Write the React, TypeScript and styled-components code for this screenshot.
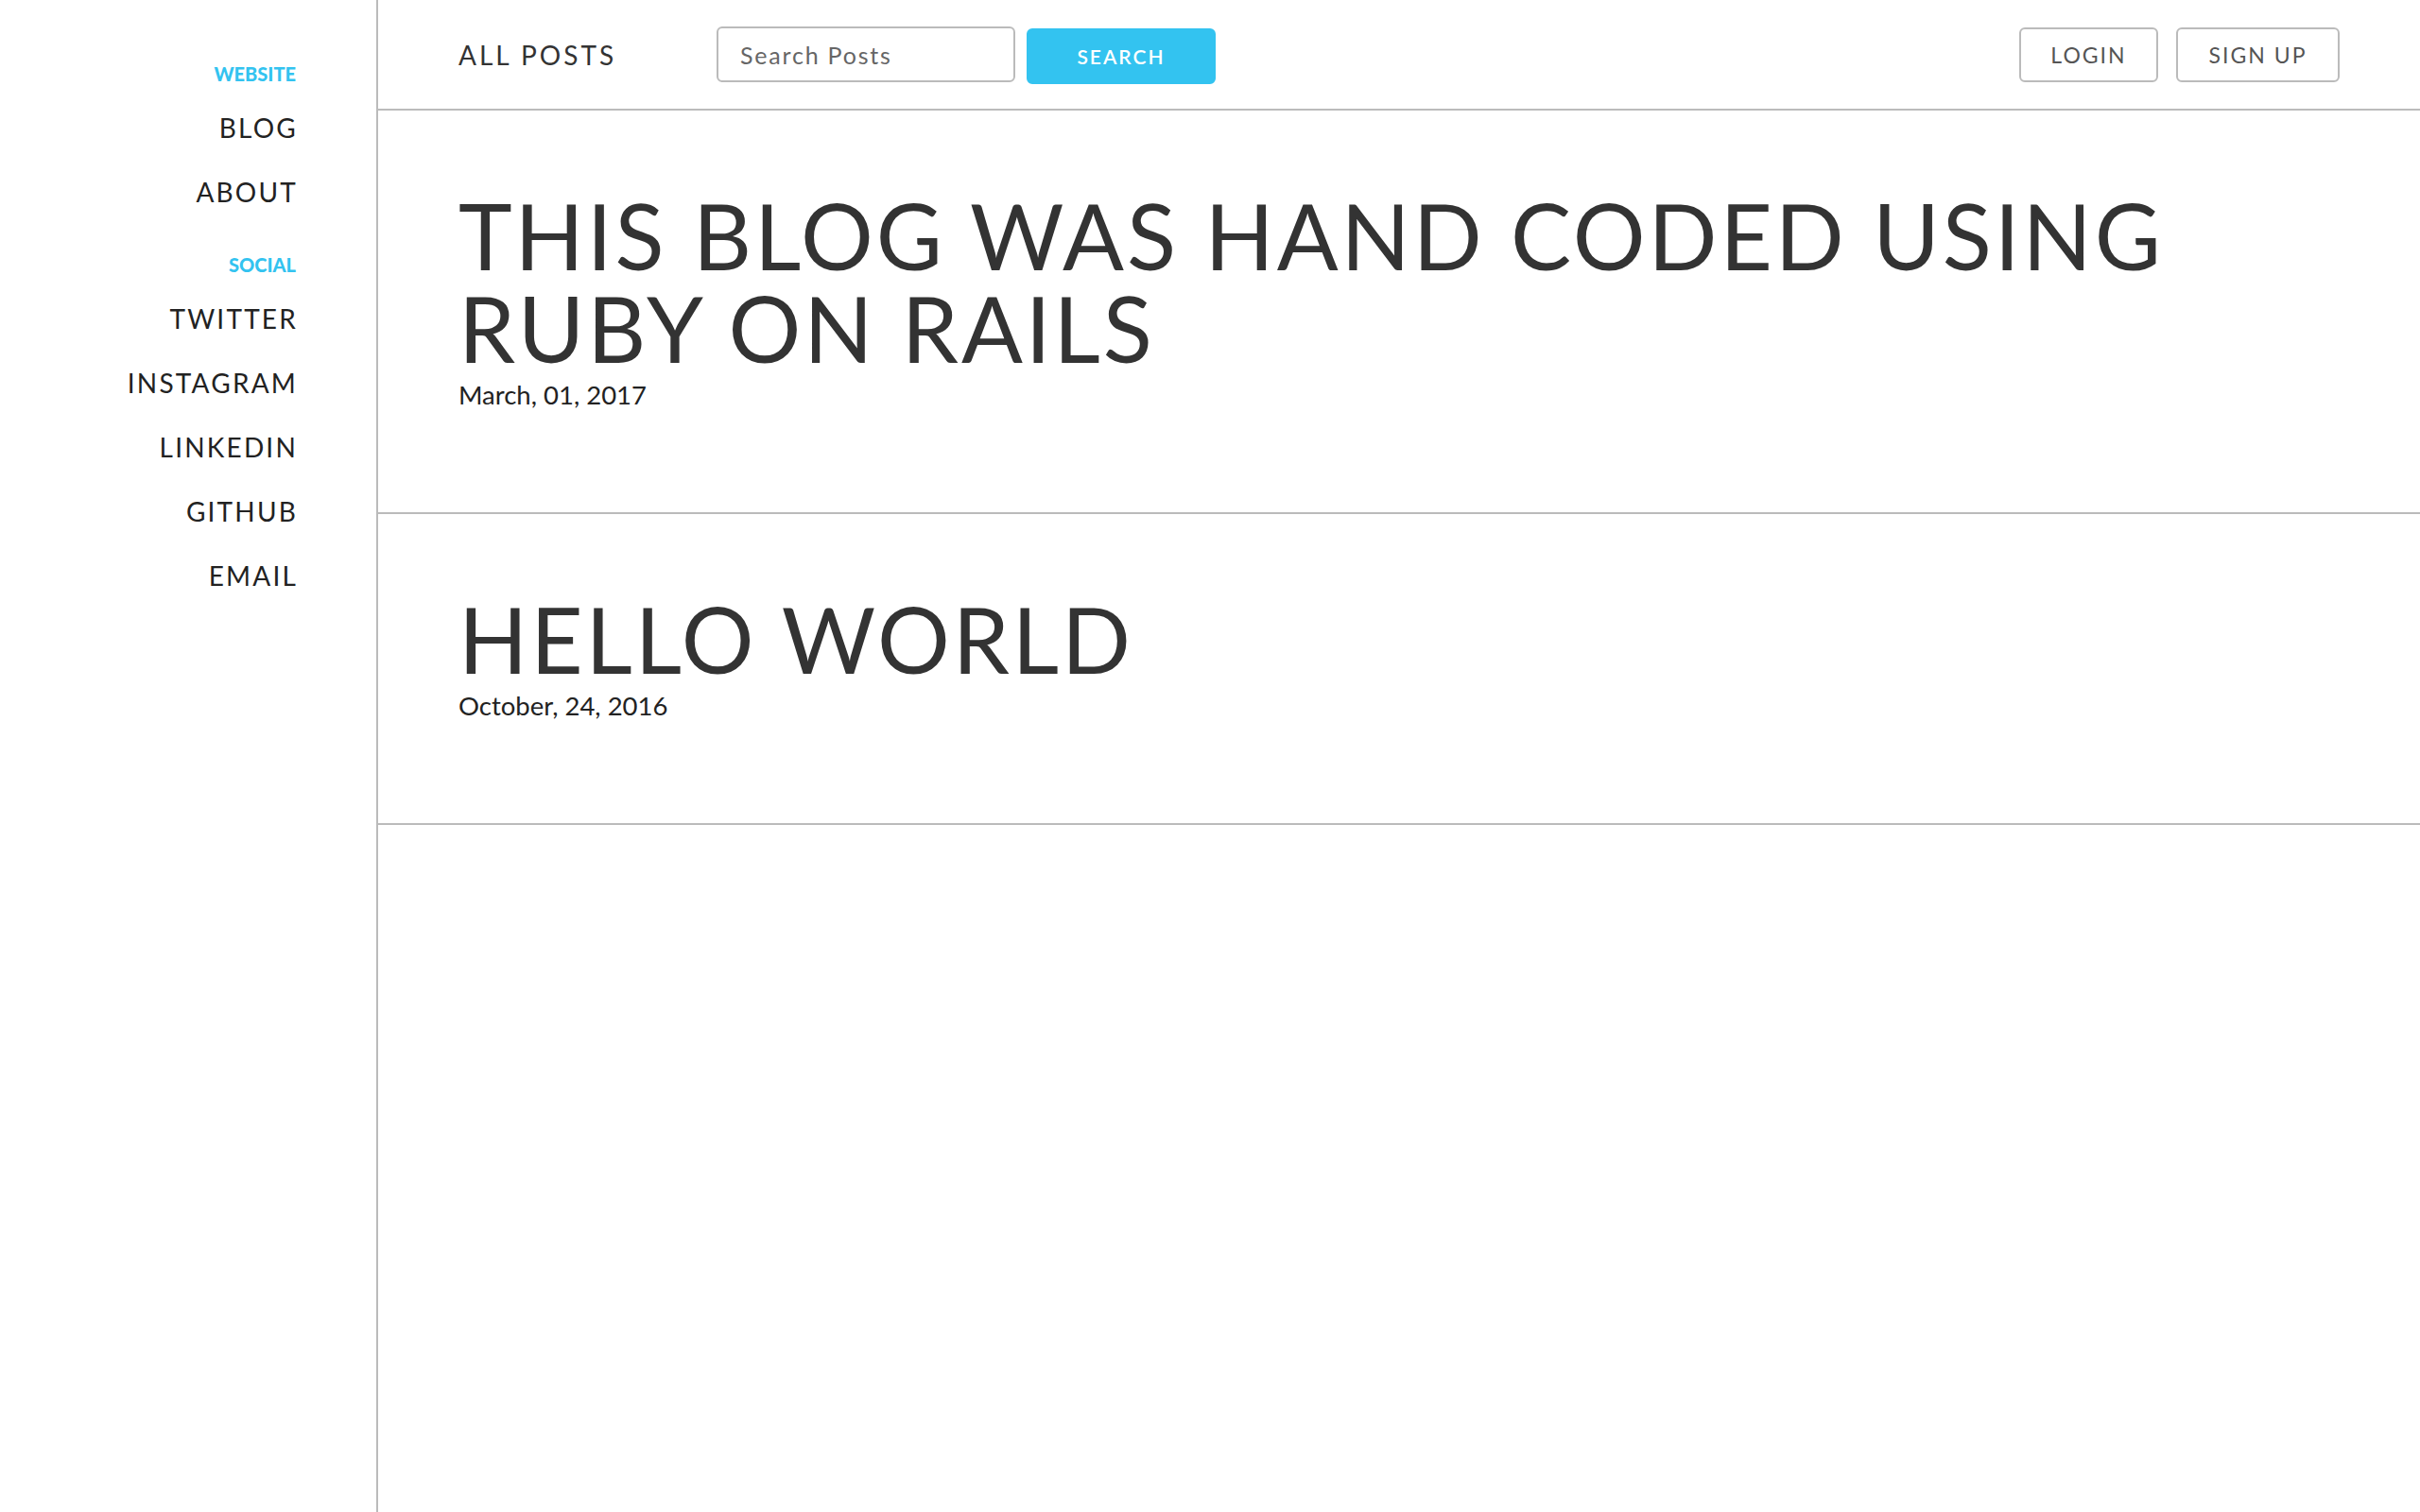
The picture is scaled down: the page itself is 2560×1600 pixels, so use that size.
import React from "react";
import styled, { createGlobalStyle } from "styled-components";

const GlobalStyle = createGlobalStyle`
  html, body {
    margin: 0;
    padding: 0;
    background: #ffffff;
    font-family: Lato, "Open Sans", "Liberation Sans", sans-serif;
    color: #222222;
  }
  * { box-sizing: border-box; }
`;

const Layout = styled.div`
  display: grid;
  grid-template-columns: 400px 1fr;
  min-height: 100vh;
`;

const Sidebar = styled.aside`
  border-right: 2px solid #bbbbbb;
  padding: 63px 85px 0 0;
  display: flex;
  flex-direction: column;
  align-items: flex-end;
`;

const NavGroup = styled.nav<{ $first?: boolean }>`
  display: flex;
  flex-direction: column;
  align-items: flex-end;
  margin-top: ${(p) => (p.$first ? "0" : "28px")};
`;

const GroupLabel = styled.div`
  font-size: 20px;
  font-weight: 900;
  line-height: 30px;
  color: #33c3f0;
  text-transform: uppercase;
  margin-bottom: 8px;
`;

const NavLink = styled.a`
  display: block;
  font-size: 28px;
  font-weight: 400;
  line-height: 68px;
  letter-spacing: 2.2px;
  color: #222222;
  text-decoration: none;
  text-transform: uppercase;
  margin-right: -2px;
`;

const Main = styled.main`
  display: flex;
  flex-direction: column;
`;

const Header = styled.header`
  height: 117px;
  border-bottom: 2px solid #bbbbbb;
  display: flex;
  align-items: center;
  padding: 0 85px;
`;

const HeaderTitle = styled.div`
  width: 273px;
  font-size: 28px;
  letter-spacing: 3px;
  color: #333333;
  text-transform: uppercase;
`;

const SearchForm = styled.form`
  display: flex;
  align-items: center;
  gap: 12px;
`;

const SearchInput = styled.input`
  width: 316px;
  height: 59px;
  border: 2px solid #bbbbbb;
  border-radius: 6px;
  padding: 0 23px;
  font-family: inherit;
  font-size: 25px;
  letter-spacing: 1.8px;
  color: #333333;
  outline: none;
  &::placeholder {
    color: #666666;
  }
`;

const Button = styled.button<{ $primary?: boolean; $width: number }>`
  width: ${(p) => p.$width}px;
  height: ${(p) => (p.$primary ? 59 : 58)}px;
  margin-top: ${(p) => (p.$primary ? 3 : 0)}px;
  border-radius: 6px;
  border: 2px solid ${(p) => (p.$primary ? "#33c3f0" : "#bbbbbb")};
  background: ${(p) => (p.$primary ? "#33c3f0" : "#ffffff")};
  color: ${(p) => (p.$primary ? "#ffffff" : "#555555")};
  font-family: inherit;
  font-size: ${(p) => (p.$primary ? 21 : 23)}px;
  font-weight: ${(p) => (p.$primary ? 600 : 400)};
  letter-spacing: 2px;
  text-transform: uppercase;
  cursor: pointer;
  padding: 0;
`;

const HeaderActions = styled.div`
  margin-left: auto;
  display: flex;
  gap: 19px;
`;

const Post = styled.article`
  padding: 83px 85px 104px;
  border-bottom: 2px solid #bbbbbb;
`;

const PostTitle = styled.h1`
  margin: 0;
  font-size: 96px;
  font-weight: 400;
  line-height: 98px;
  letter-spacing: 2.9px;
  color: #333333;
  text-transform: uppercase;
`;

const PostDate = styled.div`
  margin-top: 2px;
  font-size: 27.5px;
  line-height: 40px;
  color: #222222;
`;

const websiteLinks = ["Blog", "About"];
const socialLinks = ["Twitter", "Instagram", "LinkedIn", "GitHub", "Email"];

const posts = [
  { title: "This blog was hand coded using Ruby on Rails", date: "March, 01, 2017" },
  { title: "Hello World", date: "October, 24, 2016" },
];

export default function App() {
  return (
    <>
      <GlobalStyle />
      <Layout>
        <Sidebar>
          <NavGroup $first>
            <GroupLabel>Website</GroupLabel>
            {websiteLinks.map((l) => (
              <NavLink key={l} href="#">{l}</NavLink>
            ))}
          </NavGroup>
          <NavGroup>
            <GroupLabel>Social</GroupLabel>
            {socialLinks.map((l) => (
              <NavLink key={l} href="#">{l}</NavLink>
            ))}
          </NavGroup>
        </Sidebar>
        <Main>
          <Header>
            <HeaderTitle>All Posts</HeaderTitle>
            <SearchForm onSubmit={(e) => e.preventDefault()}>
              <SearchInput placeholder="Search Posts" />
              <Button $primary $width={200} type="submit">Search</Button>
            </SearchForm>
            <HeaderActions>
              <Button $width={147} type="button">Login</Button>
              <Button $width={173} type="button">Sign Up</Button>
            </HeaderActions>
          </Header>
          {posts.map((p) => (
            <Post key={p.title}>
              <PostTitle>{p.title}</PostTitle>
              <PostDate>{p.date}</PostDate>
            </Post>
          ))}
        </Main>
      </Layout>
    </>
  );
}
